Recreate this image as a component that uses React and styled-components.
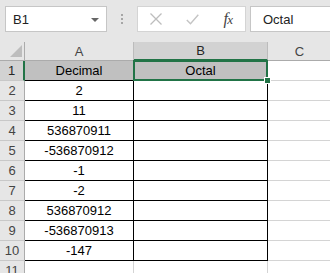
import React from 'react';
import styled, { createGlobalStyle } from 'styled-components';

const GREEN = '#217346';

const Global = createGlobalStyle`
  html, body { margin: 0; padding: 0; background: #e6e6e6; overflow: hidden; }
  body { font-family: "Liberation Sans", Arial, sans-serif; font-size: 13px; color: #000; }
`;

const Page = styled.div`
  width: 330px;
  height: 273px;
  overflow: hidden;
  background: #e6e6e6;
`;

const Toolbar = styled.div`
  display: flex;
  align-items: flex-start;
  height: 42px;
  box-sizing: border-box;
  padding: 6px 0 0 5px;
  background: #e6e6e6;
`;

const NameBox = styled.div`
  width: 102px;
  height: 26px;
  flex: none;
  box-sizing: border-box;
  border: 1px solid #c6c6c6;
  background: #fff;
  display: flex;
  align-items: center;
  justify-content: space-between;
  padding: 0 7px;
  color: #222;
`;

const Arrow = styled.span`
  width: 0;
  height: 0;
  border-left: 4px solid transparent;
  border-right: 4px solid transparent;
  border-top: 4px solid #666;
  margin-top: 1px;
`;

const Grip = styled.div`
  width: 30px;
  height: 26px;
  flex: none;
  display: flex;
  flex-direction: column;
  align-items: center;
  justify-content: center;
  gap: 2px;
`;

const GripDot = styled.span`
  width: 2px;
  height: 2px;
  background: #a6a6a6;
`;

const ButtonGroup = styled.div`
  width: 109px;
  height: 26px;
  flex: none;
  box-sizing: border-box;
  border: 1px solid #d4d4d4;
  background: #fff;
  display: flex;
  align-items: center;
  padding-left: 5px;
  gap: 10px;
`;

const IconButton = styled.span`
  width: 26px;
  height: 24px;
  display: flex;
  align-items: center;
  justify-content: center;
`;

const Fx = styled.span`
  font-family: "Liberation Serif", "Times New Roman", serif;
  font-style: italic;
  font-size: 16px;
  color: #444;
  letter-spacing: -0.5px;
  & > small { font-size: 13px; }
`;

const FormulaInput = styled.div`
  flex: 1;
  height: 26px;
  margin-left: 4px;
  margin-right: -10px;
  box-sizing: border-box;
  border: 1px solid #c6c6c6;
  background: #fff;
  display: flex;
  align-items: center;
  padding-left: 12px;
  color: #222;
`;

const Sheet = styled.div`
  display: grid;
  grid-template-columns: 25px 109px 134px 64px;
  grid-template-rows: 19px repeat(11, 20px);
  background: #fff;
`;

const Corner = styled.div`
  box-sizing: border-box;
  background: #e6e6e6;
  border-right: 1px solid #ababab;
  border-bottom: 1px solid #ababab;
  display: flex;
  align-items: flex-end;
  justify-content: flex-end;
  padding: 0 2px 3px 0;
`;

const ColHeader = styled.div`
  box-sizing: border-box;
  background: ${p => (p.$selected ? '#d2d2d2' : '#e6e6e6')};
  border-right: 1px solid #bcbcbc;
  border-bottom: ${p => (p.$selected ? `2px solid ${GREEN}` : '1px solid #ababab')};
  display: flex;
  align-items: center;
  justify-content: center;
  color: ${p => (p.$selected ? '#262626' : '#444')};
`;

const RowHeader = styled.div`
  box-sizing: border-box;
  background: ${p => (p.$selected ? '#d2d2d2' : '#e6e6e6')};
  border-right: ${p => (p.$selected ? `2px solid ${GREEN}` : '1px solid #ababab')};
  border-bottom: 1px solid #c8c8c8;
  display: flex;
  align-items: center;
  justify-content: center;
  color: ${p => (p.$selected ? '#262626' : '#444')};
`;

const Cell = styled.div`
  position: relative;
  box-sizing: border-box;
  background: ${p => p.$fill || '#fff'};
  border-right: 1px solid ${p => (p.$boxed ? '#000' : '#d4d4d4')};
  border-bottom: 1px solid ${p => (p.$boxed ? '#000' : '#d4d4d4')};
  display: flex;
  align-items: center;
  justify-content: center;
  white-space: nowrap;
  color: #000;

  ${p =>
    p.$selected &&
    `
    &::before {
      content: '';
      position: absolute;
      left: -1px; top: -1px; right: -1px; bottom: -1px;
      border: 2px solid ${GREEN};
      pointer-events: none;
    }
    &::after {
      content: '';
      position: absolute;
      right: -4px; bottom: -4px;
      width: 5px; height: 5px;
      background: ${GREEN};
      border: 1px solid #fff;
      z-index: 2;
    }
  `}
`;

const values = ['2', '11', '536870911', '-536870912', '-1', '-2', '536870912', '-536870913', '-147'];

export default function App() {
  const rows = [];
  rows.push(
    <React.Fragment key="r1">
      <RowHeader $selected>1</RowHeader>
      <Cell $boxed $fill="#c0c0c0">Decimal</Cell>
      <Cell $boxed $fill="#c0c0c0" $selected>Octal</Cell>
      <Cell />
    </React.Fragment>
  );
  values.forEach((v, i) => {
    rows.push(
      <React.Fragment key={`r${i + 2}`}>
        <RowHeader>{i + 2}</RowHeader>
        <Cell $boxed>{v}</Cell>
        <Cell $boxed />
        <Cell />
      </React.Fragment>
    );
  });
  rows.push(
    <React.Fragment key="r11">
      <RowHeader>11</RowHeader>
      <Cell />
      <Cell />
      <Cell />
    </React.Fragment>
  );

  return (
    <Page>
      <Global />
      <Toolbar>
        <NameBox>
          <span>B1</span>
          <Arrow />
        </NameBox>
        <Grip>
          <GripDot />
          <GripDot />
          <GripDot />
        </Grip>
        <ButtonGroup>
          <IconButton>
            <svg width="12" height="12" viewBox="0 0 12 12">
              <path d="M0.5 0.5 L11.5 11.5 M11.5 0.5 L0.5 11.5" stroke="#bdbdbd" strokeWidth="1.3" fill="none" />
            </svg>
          </IconButton>
          <IconButton>
            <svg width="13" height="11" viewBox="0 0 13 11">
              <path d="M0.8 6 L4.5 9.8 L12.3 0.8" stroke="#c4c4c4" strokeWidth="1.4" fill="none" />
            </svg>
          </IconButton>
          <IconButton>
            <Fx>f<small>x</small></Fx>
          </IconButton>
        </ButtonGroup>
        <FormulaInput>Octal</FormulaInput>
      </Toolbar>
      <Sheet>
        <Corner>
          <svg width="12" height="12" viewBox="0 0 12 12">
            <polygon points="12,0 12,12 0,12" fill="#bdbdbd" />
          </svg>
        </Corner>
        <ColHeader>A</ColHeader>
        <ColHeader $selected>B</ColHeader>
        <ColHeader>C</ColHeader>
        {rows}
      </Sheet>
    </Page>
  );
}
